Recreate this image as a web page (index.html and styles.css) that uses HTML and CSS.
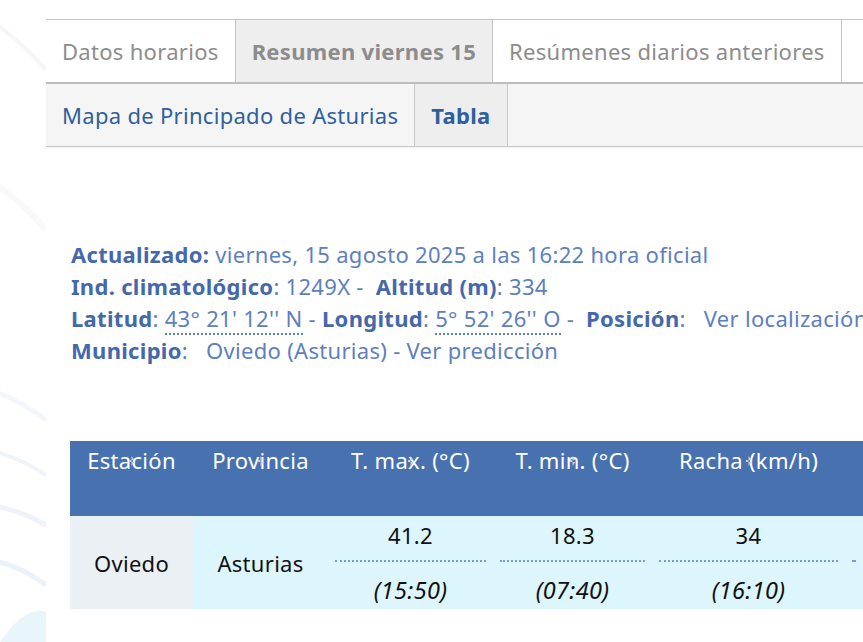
FILE: index.html
```html
<!DOCTYPE html>
<html lang="es">
<head>
<meta charset="utf-8">
<title>Resumen viernes 15 - Oviedo</title>
<link rel="stylesheet" href="styles.css">
</head>
<body>
<div class="bg-deco">
  <svg width="46" height="642" viewBox="0 0 46 642">
    <path d="M-10 20 Q 20 40 46 70" stroke="#f4f6f8" stroke-width="4" fill="none"/>
    <path d="M-10 180 Q 20 200 46 230" stroke="#f7f9fb" stroke-width="6" fill="none"/>
    <path d="M-10 390 Q 20 400 46 420" stroke="#f3f6fa" stroke-width="5" fill="none"/>
    <path d="M-10 450 Q 20 458 46 475" stroke="#f0f4f9" stroke-width="4" fill="none"/>
    <path d="M-10 505 Q 20 510 46 525" stroke="#eef3f9" stroke-width="5" fill="none"/>
    <path d="M-10 560 Q 20 565 46 585" stroke="#ecf2f9" stroke-width="5" fill="none"/>
    <path d="M0 642 Q 25 605 46 612 L46 642 Z" fill="#e8f5fb"/>
  </svg>
</div>
<div class="page">
  <nav class="tabs">
    <ul class="tab-row primary">
      <li class="tab">Datos horarios</li>
      <li class="tab active">Resumen viernes 15</li>
      <li class="tab">Resúmenes diarios anteriores</li>
      <li class="tab tab-more"></li>
    </ul>
    <ul class="tab-row secondary">
      <li class="tab">Mapa de Principado de Asturias</li>
      <li class="tab active">Tabla</li>
    </ul>
  </nav>

  <div class="info">
    <p><b>Actualizado:</b> viernes, 15 agosto 2025 a las 16:22 hora oficial</p>
    <p><b>Ind. climatológico</b>: 1249X -&nbsp; <b>Altitud (m)</b>: 334</p>
    <p><b>Latitud</b>: <abbr>43° 21' 12'' N</abbr> - <b>Longitud</b>: <abbr>5° 52' 26'' O</abbr> -&nbsp; <b>Posición</b>:&nbsp;&nbsp; Ver localización</p>
    <p><b>Municipio</b>:&nbsp;&nbsp; Oviedo (Asturias) - Ver predicción</p>
  </div>

  <table class="data">
    <thead>
      <tr>
        <th class="c-est">Estación<span class="sort"></span></th>
        <th class="c-prov">Provincia<span class="sort"></span></th>
        <th class="c-max">T. max. (°C)<span class="sort"></span></th>
        <th class="c-min">T. min. (°C)<span class="sort"></span></th>
        <th class="c-racha">Racha (km/h)<span class="sort"></span></th>
        <th class="c-next"></th>
      </tr>
    </thead>
    <tbody>
      <tr>
        <td class="station">Oviedo</td>
        <td class="plain">Asturias</td>
        <td><div class="val">41.2</div><div class="time">(15:50)</div></td>
        <td><div class="val">18.3</div><div class="time">(07:40)</div></td>
        <td><div class="val">34</div><div class="time">(16:10)</div></td>
        <td><div class="val"></div><div class="time"></div></td>
      </tr>
    </tbody>
  </table>
</div>
</body>
</html>
```
FILE: styles.css
```css
html, body {
  margin: 0;
  padding: 0;
  overflow: hidden;
  background: #fff;
}
body {
  font-family: "Noto Sans", "DejaVu Sans", sans-serif;
  font-size: 22px;
  letter-spacing: 0.3px;
  width: 863px;
  height: 642px;
  position: relative;
}
.bg-deco {
  position: absolute;
  left: 0;
  top: 0;
  width: 46px;
  height: 642px;
}
.page {
  margin-left: 46px;
  padding-top: 19px;
  width: 1000px;
}
.tabs {
  width: 1000px;
}
.tab-row {
  list-style: none;
  margin: 0;
  padding: 0;
  display: flex;
}
.tab-row .tab {
  padding: 0 16px;
  white-space: nowrap;
}
.primary {
  border-top: 1px solid #c4c4c4;
  border-bottom: 2px solid #bdbdbd;
  height: 62px;
  line-height: 62px;
}
.primary .tab {
  color: #8c8c8c;
  border-right: 1px solid #c4c4c4;
  background: #fff;
}
.primary .tab.active {
  background: #eeeeee;
  font-weight: bold;
}
.primary .tab-more {
  flex: 1;
}
.secondary {
  background: #f5f5f5;
  height: 62px;
  line-height: 62px;
  border-bottom: 1px solid #c8c8c8;
  box-shadow: 0 1px 2px rgba(0,0,0,0.06);
}
.secondary .tab {
  color: #2f5f9e;
}
.secondary .tab.active {
  background: #eeeeee;
  font-weight: bold;
  border-left: 1px solid #c8c8c8;
  border-right: 1px solid #c8c8c8;
}
.info {
  margin-top: 91px;
  padding-left: 25px;
  color: #5d80c0;
  line-height: 32px;
  white-space: nowrap;
}
.info p {
  margin: 0;
}
.info b {
  color: #4468ab;
}
.info abbr {
  text-decoration: none;
  border-bottom: 2px dotted #5d80c0;
}
.data {
  margin-top: 75px;
  margin-left: 24px;
  border-collapse: collapse;
  table-layout: fixed;
  width: 793px;
}
.data th {
  background: #4871b0;
  color: #fff;
  font-weight: normal;
  vertical-align: top;
  text-align: center;
  height: 75px;
  padding: 4px 0 0;
  box-sizing: border-box;
  position: relative;
  white-space: nowrap;
}
.sort {
  position: absolute;
  left: 50%;
  top: 15px;
  width: 6px;
  height: 10px;
  margin-left: -3px;
  background: #c9d0dc;
  clip-path: polygon(50% 0, 100% 40%, 0 40%, 0 60%, 100% 60%, 50% 100%);
}
.c-est { width: 123px; }
.c-prov { width: 135px; }
.c-max { width: 165px; }
.c-min { width: 159px; }
.c-racha { width: 193px; }
.c-next { width: 18px; }
.data td {
  background: #ddf6fd;
  color: #111;
  text-align: center;
  height: 93px;
  padding: 0 7px;
  box-sizing: border-box;
  vertical-align: top;
}
.data td.station,
.data td.plain {
  vertical-align: middle;
  padding-top: 0;
}
.data td.station {
  background: #ebf0f4;
}
.val {
  height: 44px;
  line-height: 38px;
  border-bottom: 2px dotted #7b9bd6;
}
.time {
  font-style: italic;
  font-size: 23.5px;
  line-height: 56px;
  height: 47px;
}
```
